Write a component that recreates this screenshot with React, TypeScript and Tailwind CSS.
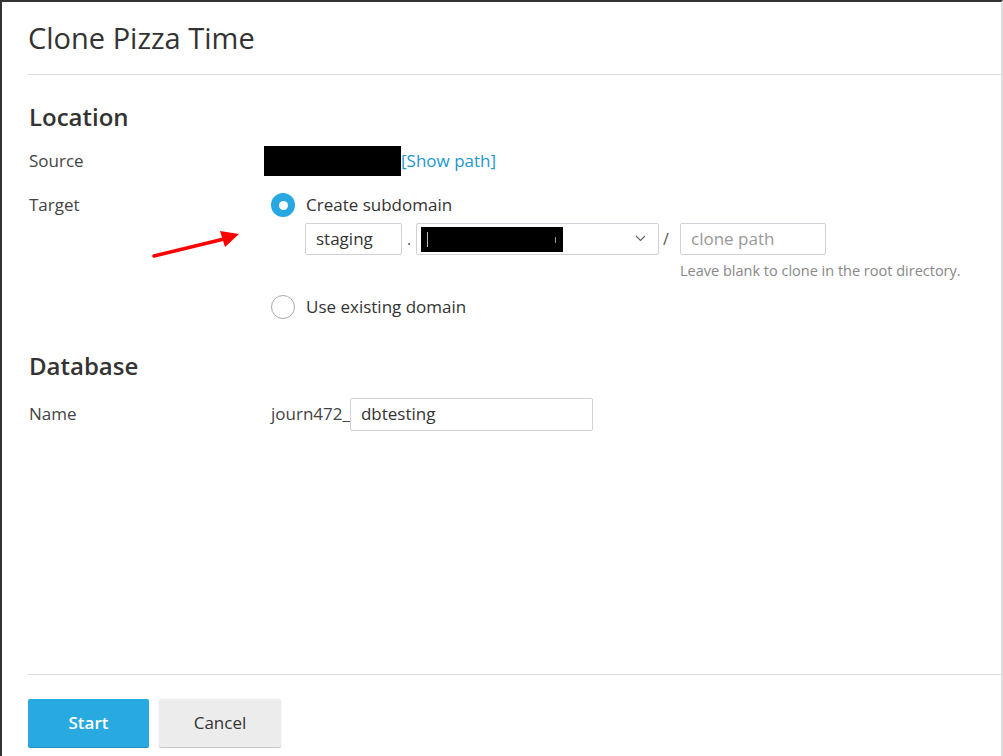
import React from "react";

function Radio({ checked }: { checked: boolean }) {
  return checked ? (
    <span className="flex h-[24px] w-[24px] items-center justify-center rounded-full bg-[#28a8e0]">
      <span className="h-[9px] w-[9px] rounded-full bg-white" />
    </span>
  ) : (
    <span className="h-[24px] w-[24px] rounded-full border border-[#a9a9a9] bg-white" />
  );
}

export default function App() {
  return (
    <div
      className="relative flex h-[756px] w-[1003px] flex-col overflow-hidden border-l-2 border-t-2 border-r-2 border-l-[#333] border-t-[#333] border-r-[#dcdcdc] bg-white text-[#333]"
      style={{ fontFamily: '"Open Sans", "Noto Sans", sans-serif' }}
    >
      {/* Header */}
      <div className="ml-[26px] flex h-[73px] items-center border-b border-[#dcdde3]">
        <h1 className="-mt-[2px] text-[29px] font-normal leading-none text-[#333]">Clone Pizza Time</h1>
      </div>

      {/* Body */}
      <div className="flex flex-col pl-[27px]">
        <h2 className="mt-[27px] text-[24px] font-semibold leading-[30px] text-[#333]">Location</h2>

        <div className="mt-[14px] flex h-[30px] items-center">
          <div className="w-[235px] text-[17px] text-[#444]">Source</div>
          <div className="flex items-center">
            <span className="h-[30px] w-[137px] bg-black" />
            <span className="text-[17px] text-[#1d98cf]">[Show path]</span>
          </div>
        </div>

        <div className="mt-[17px] flex items-start">
          <div className="w-[242px] text-[17px] leading-[24px] text-[#444]">Target</div>
          <div className="flex flex-col">
            <label className="flex h-[24px] items-center gap-[11px]">
              <Radio checked />
              <span className="text-[17px] text-[#333]">Create subdomain</span>
            </label>

            <div className="mt-[6px] ml-[34px] flex items-start">
              <div className="flex h-[32px] w-[97px] items-center rounded-[2px] border border-[#cfd2d6] px-[10px] text-[17px] text-[#333]">
                staging
              </div>
              <span className="flex h-[32px] w-[14px] items-center justify-center text-[16px] text-[#555]">.</span>
              <div className="relative flex h-[32px] w-[243px] items-center rounded-[2px] border border-[#cfd2d6] pl-[4px]">
                <span className="relative h-[25px] w-[142px] bg-black">
                  <span className="absolute left-[6px] top-[5px] h-[15px] w-[1px] bg-[#bbb]" />
                  <span className="absolute right-[7px] top-[10px] h-[6px] w-[1px] bg-[#999]" />
                </span>
                <svg className="absolute right-[12px] top-[11px]" width="11" height="7" viewBox="0 0 11 7">
                  <path d="M1 1 L5.5 5.5 L10 1" fill="none" stroke="#666" strokeWidth="1.2" />
                </svg>
              </div>
              <span className="flex h-[32px] w-[21px] items-center justify-start pl-[4px] text-[16px] text-[#555]">/</span>
              <div className="flex flex-col">
                <div className="flex h-[32px] w-[146px] items-center rounded-[2px] border border-[#cfd2d6] px-[10px] text-[17px] text-[#999]">
                  clone path
                </div>
                <div className="mt-[6px] text-[14.5px] leading-[20px] text-[#888]">Leave blank to clone in the root directory.</div>
              </div>
            </div>

            <label className="mt-[14px] flex h-[24px] items-center gap-[11px]">
              <Radio checked={false} />
              <span className="text-[17px] text-[#333]">Use existing domain</span>
            </label>
          </div>
        </div>

        <h2 className="mt-[32px] text-[24px] font-semibold leading-[30px] text-[#333]">Database</h2>

        <div className="mt-[17px] flex h-[32px] items-center">
          <div className="w-[242px] text-[17px] text-[#444]">Name</div>
          <span className="text-[17px] text-[#444]">journ472_</span>
          <div className="flex h-[33px] w-[243px] items-center rounded-[2px] border border-[#cfd2d6] px-[10px] text-[17px] text-[#333]">
            dbtesting
          </div>
        </div>
      </div>

      {/* Footer */}
      <div className="mt-auto ml-[26px] border-t border-[#dcdde3] pb-[9px] pt-[24px]">
        <div className="flex gap-[10px]">
          <button className="h-[48px] w-[121px] rounded-[2px] bg-[#28a9df] text-[17px] font-semibold text-white shadow-[0_1px_0_#1f8fc0]">
            Start
          </button>
          <button className="h-[48px] w-[122px] rounded-[2px] bg-[#ececec] text-[17px] font-medium text-[#333] shadow-[0_1px_1px_#c4c4c4]">
            Cancel
          </button>
        </div>
      </div>

      {/* Red annotation arrow */}
      <svg className="absolute left-[148px] top-[226px]" width="92" height="34" viewBox="0 0 92 34">
        <line x1="4" y1="28" x2="74" y2="11" stroke="#ff0000" strokeWidth="3.5" strokeLinecap="round" />
        <polygon points="89,6 70,3 75,19" fill="#ff0000" />
      </svg>
    </div>
  );
}
